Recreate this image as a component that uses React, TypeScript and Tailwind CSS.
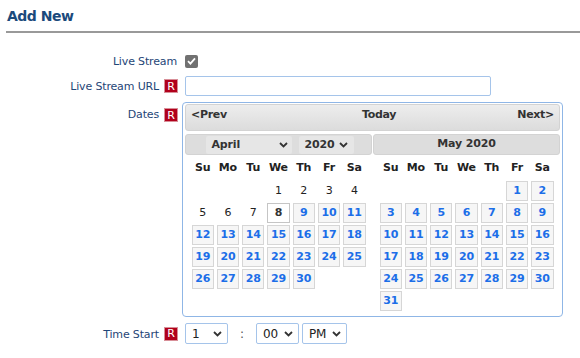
import React from "react";

type Day = { n: number; kind: "past" | "today" | "open" } | null;

const buildMonth = (offset: number, days: number, past: number, today: number): Day[] => {
  const cells: Day[] = Array.from({ length: offset }, () => null);
  for (let n = 1; n <= days; n++) {
    cells.push({ n, kind: n <= past ? "past" : n === today ? "today" : "open" });
  }
  return cells;
};

const april = buildMonth(3, 30, 7, 8);
const may = buildMonth(5, 31, 0, 0);
const weekdays = ["Su", "Mo", "Tu", "We", "Th", "Fr", "Sa"];

function Chevron() {
  return (
    <svg width="9" height="6" viewBox="0 0 9 6" className="text-[#333]">
      <path d="M1 1l3.5 3.5L8 1" fill="none" stroke="currentColor" strokeWidth="1.8" />
    </svg>
  );
}

function Req() {
  return (
    <span className="flex h-[14px] w-[14px] items-center justify-center border border-[#d88f98] bg-[#b1001b] text-[11px] leading-none text-white">
      R
    </span>
  );
}

function Cell({ d }: { d: Day }) {
  if (!d) return <div className="h-[20px]" />;
  if (d.kind === "past")
    return <div className="flex h-[20px] items-center justify-center text-[#222]">{d.n}</div>;
  if (d.kind === "today")
    return (
      <div className="flex h-[20px] items-center justify-center border border-[#c5c5c5] bg-white font-bold text-[#333]">
        {d.n}
      </div>
    );
  return (
    <div className="flex h-[20px] items-center justify-center border border-[#d6d6d6] bg-[#f6f6f6] font-bold text-[#1c6ee8]">
      {d.n}
    </div>
  );
}

function Month({ days }: { days: Day[] }) {
  return (
    <div className="mx-auto w-[174px]">
      <div className="mt-[5px] grid h-[16px] grid-cols-7 gap-x-[3px] font-bold leading-[16px] text-[#222]">
        {weekdays.map((w) => (
          <div key={w} className="text-center">{w}</div>
        ))}
      </div>
      <div className="mt-[5px] grid grid-cols-7 gap-x-[3px] gap-y-[2px]">
        {days.map((d, i) => (
          <Cell key={i} d={d} />
        ))}
      </div>
    </div>
  );
}

function Calendar() {
  return (
    <div className="w-[381px] rounded-[4px] border border-[#8fb6e6] bg-white px-[2px] pb-[5px] pt-[1px] text-[11px]">
      <div className="flex h-[27px] justify-between rounded-[3px] border border-[#d3d3d3] bg-gradient-to-b from-[#ededed] to-[#dcdcdc] px-[5px] pt-[2px] font-bold leading-[16px] tracking-[-0.3px] text-[#333]">
        <span>&lt;Prev</span>
        <span className="pl-[14px]">Today</span>
        <span>Next&gt;</span>
      </div>
      <div className="mt-[3px] flex gap-[1px]">
        <div className="w-[187px]">
          <div className="flex h-[21px] items-end justify-center gap-[7px] rounded-[3px] border border-[#d3d3d3] bg-[#dddddd] pl-[2px]">
            <div className="flex h-[18px] w-[86px] items-center justify-between rounded-[2px] bg-[#e6e6e6] pl-[6px] pr-[4px] font-bold text-[#333]">
              <span>April</span>
              <Chevron />
            </div>
            <div className="flex h-[18px] w-[55px] items-center justify-between rounded-[2px] bg-[#e6e6e6] pl-[6px] pr-[6px] font-bold text-[#333]">
              <span>2020</span>
              <Chevron />
            </div>
          </div>
          <Month days={april} />
        </div>
        <div className="w-[187px]">
          <div className="flex h-[21px] items-center justify-center rounded-[3px] border border-[#d3d3d3] bg-[#dddddd] font-bold text-[#333]">
            May 2020
          </div>
          <Month days={may} />
        </div>
      </div>
    </div>
  );
}

function TimeSelect({ value, w }: { value: string; w: string }) {
  return (
    <div className={`flex h-[21px] ${w} items-center justify-between rounded-[2px] border border-[#a5c4ea] bg-white pl-[6px] pr-[5px] text-[12px] text-[#222]`}>
      <span>{value}</span>
      <Chevron />
    </div>
  );
}

export default function App() {
  return (
    <div className="min-h-[358px] w-[580px] bg-white font-['DejaVu_Sans',sans-serif] text-[11px] tracking-[-0.15px] text-[#1f4677]">
      <div className="ml-[6px] h-[33px] border-b-2 border-[#999]">
        <h1 className="pl-[1px] pt-[6px] text-[14px] font-bold leading-[20px] tracking-[-0.5px] text-[#1b4a7c]">
          Add New
        </h1>
      </div>

      <div className="mt-[21px] flex h-[14px] items-center">
        <div className="flex w-[178px] justify-end pr-[1px] pt-[3px]">Live Stream</div>
        <div className="ml-[7px] flex h-[13px] w-[13px] items-center justify-center rounded-[2px] bg-[#717171]">
          <svg width="9" height="8" viewBox="0 0 9 8">
            <path d="M1 4.2l2.4 2.4L8 1.3" fill="none" stroke="white" strokeWidth="1.8" />
          </svg>
        </div>
      </div>

      <div className="mt-[8px] flex h-[20px] items-center">
        <div className="flex w-[178px] items-center justify-end gap-[5px]">
          <span className="pt-[3px]">Live Stream URL</span>
          <Req />
        </div>
        <input className="ml-[7px] h-[20px] w-[306px] rounded-[2px] border border-[#a5c4ea] bg-white outline-none" />
      </div>

      <div className="mt-[6px] flex items-start">
        <div className="flex w-[178px] items-center justify-end gap-[5px] pt-[5px]">
          <span>Dates</span>
          <Req />
        </div>
        <div className="ml-[4px]">
          <Calendar />
        </div>
      </div>

      <div className="mt-[6px] flex h-[21px] items-center">
        <div className="flex w-[178px] items-center justify-end gap-[5px]">
          <span className="pt-[3px]">Time Start</span>
          <Req />
        </div>
        <div className="ml-[7px] flex items-center">
          <TimeSelect value="1" w="w-[43px]" />
          <span className="mx-[12px] text-[12px] text-[#555]">:</span>
          <TimeSelect value="00" w="w-[43px]" />
          <div className="ml-[3px]">
            <TimeSelect value="PM" w="w-[45px]" />
          </div>
        </div>
      </div>
    </div>
  );
}
